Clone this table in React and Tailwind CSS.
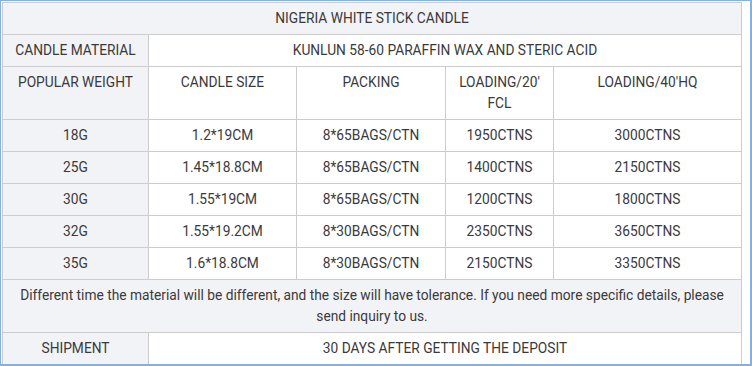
const rows = [
  ['18G', '1.2*19CM', '8*65BAGS/CTN', '1950CTNS', '3000CTNS'],
  ['25G', '1.45*18.8CM', '8*65BAGS/CTN', '1400CTNS', '2150CTNS'],
  ['30G', '1.55*19CM', '8*65BAGS/CTN', '1200CTNS', '1800CTNS'],
  ['32G', '1.55*19.2CM', '8*30BAGS/CTN', '2350CTNS', '3650CTNS'],
  ['35G', '1.6*18.8CM', '8*30BAGS/CTN', '2150CTNS', '3350CTNS'],
]

const cell = 'border border-[#cccccc] px-[6px] py-[5px] text-center'
const grey = 'bg-[#f2f3f7]'

export default function App() {
  return (
    <div className="w-[752px] h-[366px] overflow-hidden bg-white border-t border-l border-r-2 border-b-2 border-[#83b2e2] pl-[1px] pt-[1px]">
      <table
        className="w-[739px] table-fixed border-collapse text-[13.75px] leading-[21px] text-[#3a3a3a]"
        style={{ fontFamily: 'Roboto, "Liberation Sans", sans-serif' }}
      >
        <colgroup>
          <col className="w-[146px]" />
          <col className="w-[148px]" />
          <col className="w-[149px]" />
          <col className="w-[108px]" />
          <col className="w-[188px]" />
        </colgroup>
        <tbody>
          {/* title */}
          <tr>
            <td colSpan={5} className={`${cell} ${grey}`}>NIGERIA WHITE STICK CANDLE</td>
          </tr>
          <tr>
            <td className={`${cell} ${grey}`}>CANDLE MATERIAL</td>
            <td colSpan={4} className={cell}>KUNLUN 58-60 PARAFFIN WAX AND STERIC ACID</td>
          </tr>

          {/* column heads */}
          <tr className="align-top">
            <td className={`${cell} ${grey}`}>POPULAR WEIGHT</td>
            <td className={cell}>CANDLE SIZE</td>
            <td className={cell}>PACKING</td>
            <td className={cell}>LOADING/20'<br />FCL</td>
            <td className={cell}>LOADING/40'HQ</td>
          </tr>

          {rows.map((r) => (
            <tr key={r[0]}>
              <td className={`${cell} ${grey}`}>{r[0]}</td>
              <td className={cell}>{r[1]}</td>
              <td className={cell}>{r[2]}</td>
              <td className={cell}>{r[3]}</td>
              <td className={cell}>{r[4]}</td>
            </tr>
          ))}

          <tr>
            <td colSpan={5} className={`${cell} ${grey}`}>
              Different time the material will be different, and the size will have tolerance. If you need more specific details, please
              <br />
              send inquiry to us.
            </td>
          </tr>
          <tr>
            <td className={`${cell} ${grey}`}>SHIPMENT</td>
            <td colSpan={4} className={cell}>30 DAYS AFTER GETTING THE DEPOSIT</td>
          </tr>
        </tbody>
      </table>
    </div>
  )
}
